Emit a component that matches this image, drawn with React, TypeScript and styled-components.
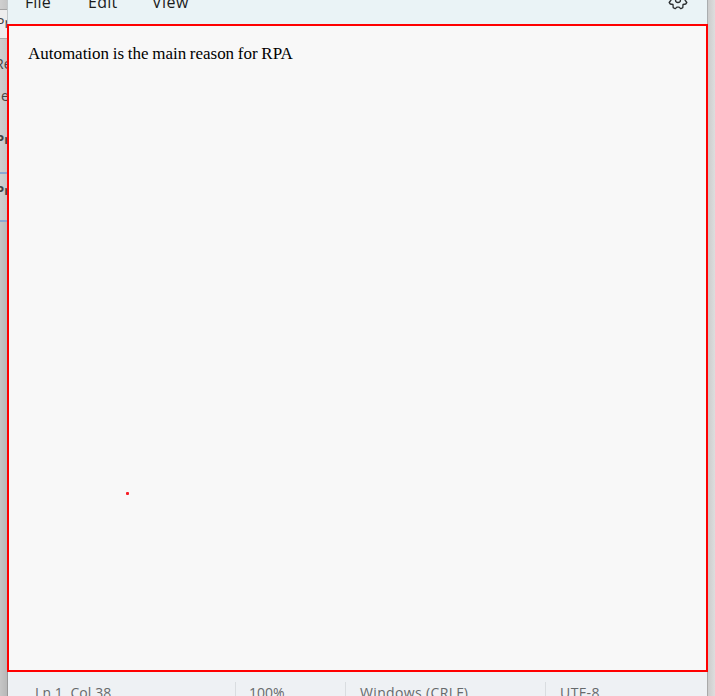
import React from 'react';
import styled, { createGlobalStyle } from 'styled-components';

const GlobalStyle = createGlobalStyle`
  * { box-sizing: border-box; }
  html, body { margin: 0; overflow: hidden; }
`;

const Screen = styled.div`
  display: flex;
  width: 715px;
  height: 696px;
  overflow: hidden;
  background: #cfcfcf;
  font-family: 'Open Sans', 'Noto Sans', sans-serif;
`;

const Backdrop = styled.div`
  display: flex;
  flex-direction: column;
  flex: 0 0 7px;
  overflow: hidden;
  background: linear-gradient(90deg, #c6c6c6, #b8b8b8);
`;

const BackdropRow = styled.div<{ $height: number; $bg?: string; $line?: string; $bold?: boolean; $top?: number; $indent?: number }>`
  flex: 0 0 ${p => p.$height}px;
  padding-top: ${p => p.$top ?? 0}px;
  text-indent: ${p => p.$indent ?? -2}px;
  overflow: hidden;
  white-space: nowrap;
  background: ${p => p.$bg ?? 'linear-gradient(90deg, #d0d0d0, #c6c6c6)'};
  border-bottom: ${p => (p.$line ? `${p.$bold ? 2 : 1}px solid ${p.$line}` : 'none')};
  color: #444;
  font-size: ${p => (p.$bold ? 13 : 14)}px;
  font-weight: ${p => (p.$bold ? 700 : 400)};
  line-height: 18px;
`;

const Notepad = styled.main`
  display: flex;
  flex-direction: column;
  flex: 0 0 701px;
`;

const MenuBar = styled.nav`
  display: flex;
  flex: 0 0 24px;
  overflow: hidden;
  background: #eaf3f6;
  border-left: 1px solid #c3c8ca;
  border-right: 1px solid #aaadaf;
`;

const MenuItem = styled.span<{ $width: number; $spacing: number }>`
  flex: 0 0 ${p => p.$width}px;
  margin-top: -9px;
  font-size: 16px;
  line-height: 22px;
  letter-spacing: ${p => p.$spacing}px;
  color: #1b1b1b;
  &:first-child { margin-left: 17px; }
`;

const Gear = styled.svg`
  flex: none;
  width: 20px;
  height: 20px;
  margin: -10px 19px 0 auto;
  fill: none;
  stroke: #2a2d2f;
  stroke-width: 1.3;
  stroke-linejoin: round;
`;

const Editor = styled.section`
  flex: 0 0 648px;
  padding: 18px 19px;
  border: 2px solid #ff0000;
  background: #f8f8f8;
  position: relative;
`;

const Line = styled.p`
  margin: 0;
  font-family: 'Liberation Serif', serif;
  font-size: 17px;
  line-height: 20px;
  letter-spacing: -0.02px;
  word-spacing: -0.5px;
  color: #000;
  white-space: nowrap;
`;

const PointerDot = styled.i`
  position: absolute;
  left: 117px;
  top: 466px;
  width: 3px;
  height: 3px;
  border-radius: 1px;
  background: #f81c24;
`;

const StatusBar = styled.footer`
  display: flex;
  flex: 0 0 24px;
  padding-top: 10px;
  background: #eef1f4;
  border-left: 1px solid #989898;
  border-right: 1px solid #a9a9a9;
  overflow: hidden;
`;

const StatusCell = styled.span<{ $width: number; $indent: number; $spacing: number; $first?: boolean }>`
  flex: 0 0 ${p => p.$width}px;
  padding-left: ${p => p.$indent}px;
  border-left: ${p => (p.$first ? 'none' : '1px solid #d9dde0')};
  font-size: 14px;
  line-height: 21px;
  letter-spacing: ${p => p.$spacing}px;
  color: #666a6c;
  white-space: nowrap;
`;

const RightEdge = styled.div`
  flex: 0 0 7px;
  background: linear-gradient(90deg, #cccccc, #dddddd);
`;

export default function App() {
  return (
    <>
      <GlobalStyle />
      <Screen>
        <Backdrop>
          <BackdropRow $height={10} $line="#a5a5a5" />
          <BackdropRow $height={29} $line="#aaa" $bg="#eeeeee" $top={4} $indent={-4}>Pr</BackdropRow>
          <BackdropRow $height={39} $top={16} $indent={-5}>Re</BackdropRow>
          <BackdropRow $height={40} $top={9} $indent={1}>e</BackdropRow>
          <BackdropRow $height={56} $top={12} $line="#8ba9d2" $bold $indent={-4}>Pr</BackdropRow>
          <BackdropRow $height={48} $top={7} $line="#8ba9d2" $bold $indent={-4}>Pr</BackdropRow>
        </Backdrop>
        <Notepad>
          <MenuBar>
            <MenuItem $width={63} $spacing={0.1}>File</MenuItem>
            <MenuItem $width={64} $spacing={0.25}>Edit</MenuItem>
            <MenuItem $width={50} $spacing={0.5}>View</MenuItem>
            <Gear viewBox="0 0 20 20">
              <path d="M9 2.7h2l1.7-1.5 2.2 1 .4 2.800 2.400.7 1.100 2.300-1.800 2 1.800 2.500-1.100 1.500-2.700.5-.2 3.100-2 1.100-1.700-1.600H8.900l-1.700 1.600-2-1.100-.2-3.100-2.700-.5-1.100-1.500L3 10 1.200 8l1.100-2.300L4.700 5l.4-2.800 2.200-1z" />
              <circle cx="10" cy="10" r="2.500" />
            </Gear>
          </MenuBar>
          <Editor>
            <Line>Automation is the main reason for RPA</Line>
            <PointerDot />
          </Editor>
          <StatusBar>
            <StatusCell $width={227} $indent={27} $spacing={0.1} $first>Ln 1, Col 38</StatusCell>
            <StatusCell $width={110} $indent={13} $spacing={0}>100%</StatusCell>
            <StatusCell $width={200} $indent={14} $spacing={0.35}>Windows (CRLF)</StatusCell>
            <StatusCell $width={162} $indent={14} $spacing={0.45}>UTF-8</StatusCell>
          </StatusBar>
        </Notepad>
        <RightEdge />
      </Screen>
    </>
  );
}
